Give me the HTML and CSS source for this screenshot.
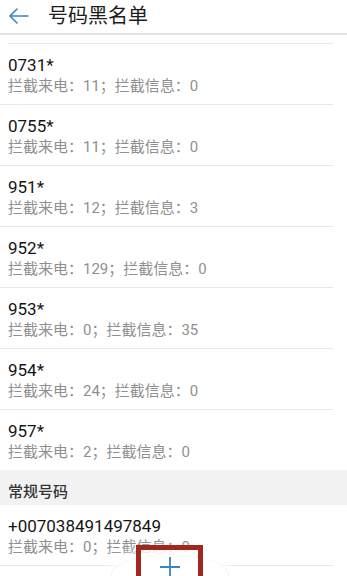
FILE: index.html
```html
<!DOCTYPE html>
<html lang="zh">
<head>
<meta charset="utf-8">
<title>号码黑名单</title>
<link rel="stylesheet" href="styles.css">
</head>
<body>
<div class="app">
  <header class="topbar">
    <svg class="back" width="22" height="18" viewBox="0 0 22 18" aria-hidden="true">
      <path d="M20 9 H2 M9 2 L2 9 L9 16" fill="none" stroke="#3c82c8" stroke-width="1.6" stroke-linecap="round" stroke-linejoin="round"/>
    </svg>
    <h1 class="title">号码黑名单</h1>
  </header>
  <div class="list">
    <div class="stub"></div>
    <div class="row"><div class="num">0731*</div><div class="sub">拦截来电：11；拦截信息：0</div></div>
    <div class="row"><div class="num">0755*</div><div class="sub">拦截来电：11；拦截信息：0</div></div>
    <div class="row"><div class="num">951*</div><div class="sub">拦截来电：12；拦截信息：3</div></div>
    <div class="row"><div class="num">952*</div><div class="sub">拦截来电：129；拦截信息：0</div></div>
    <div class="row"><div class="num">953*</div><div class="sub">拦截来电：0；拦截信息：35</div></div>
    <div class="row"><div class="num">954*</div><div class="sub">拦截来电：24；拦截信息：0</div></div>
    <div class="row last"><div class="num">957*</div><div class="sub">拦截来电：2；拦截信息：0</div></div>
    <div class="section">常规号码</div>
    <div class="row"><div class="num">+007038491497849</div><div class="sub">拦截来电：0；拦截信息：0</div></div>
  </div>
  <div class="fab"></div>
  <div class="mark"></div>
  <svg class="plus" width="22" height="22" viewBox="0 0 22 22" aria-hidden="true">
    <path d="M11 1 V21 M1 11 H21" fill="none" stroke="#3c82c8" stroke-width="1.8"/>
  </svg>
</div>
</body>
</html>
```
FILE: styles.css
```css
* { box-sizing: border-box; margin: 0; padding: 0; }
html, body { background: #fff; }
body {
  margin: 0;
  font-family: Roboto, "Noto Sans CJK SC", sans-serif;
  color: #1a1a1a;
}
.app {
  position: relative;
  width: 347px;
  height: 576px;
  overflow: hidden;
  background: #fff;
}
.topbar {
  height: 35px;
  display: flex;
  align-items: center;
  border-bottom: 2px solid #e4e4e4;
  padding-bottom: 2px;
}
.back { margin-left: 8px; flex: none; }
.title {
  margin-left: 18px;
  font-size: 20px;
  font-weight: 400;
  color: #1c1c1c;
  line-height: 26px;
}
.list { display: flex; flex-direction: column; }
.stub {
  height: 9px;
  margin: 0 14px 0 8px;
  border-bottom: 1px solid #e8e8e8;
}
.row {
  display: flex;
  flex-direction: column;
  padding: 10px 0 8px 8px;
  margin-right: 14px;
  border-bottom: 1px solid #e8e8e8;
}
.row.last { border-bottom: none; }
.num {
  font-size: 17px;
  line-height: 22px;
  color: #151515;
}
.sub {
  font-size: 15px;
  line-height: 20px;
  color: #8f8f8f;
}
.section {
  height: 35px;
  background: #f2f2f2;
  padding: 12px 0 3px 8px;
  font-size: 15px;
  line-height: 20px;
  font-weight: 500;
  color: #333;
}
.fab {
  position: absolute;
  left: 112px;
  top: 555px;
  width: 116px;
  height: 40px;
  border-radius: 50%;
  background: #fff;
  box-shadow: 0 0 0 1px rgba(0,0,0,0.05), 0 -5px 8px 3px rgba(255,255,255,0.8);
}
.mark {
  position: absolute;
  left: 136px;
  top: 545px;
  width: 67px;
  height: 50px;
  border: 5px solid #a0281e;
  background: rgba(255,255,255,0.55);
}
.plus {
  position: absolute;
  left: 159px;
  top: 556px;
}
```
